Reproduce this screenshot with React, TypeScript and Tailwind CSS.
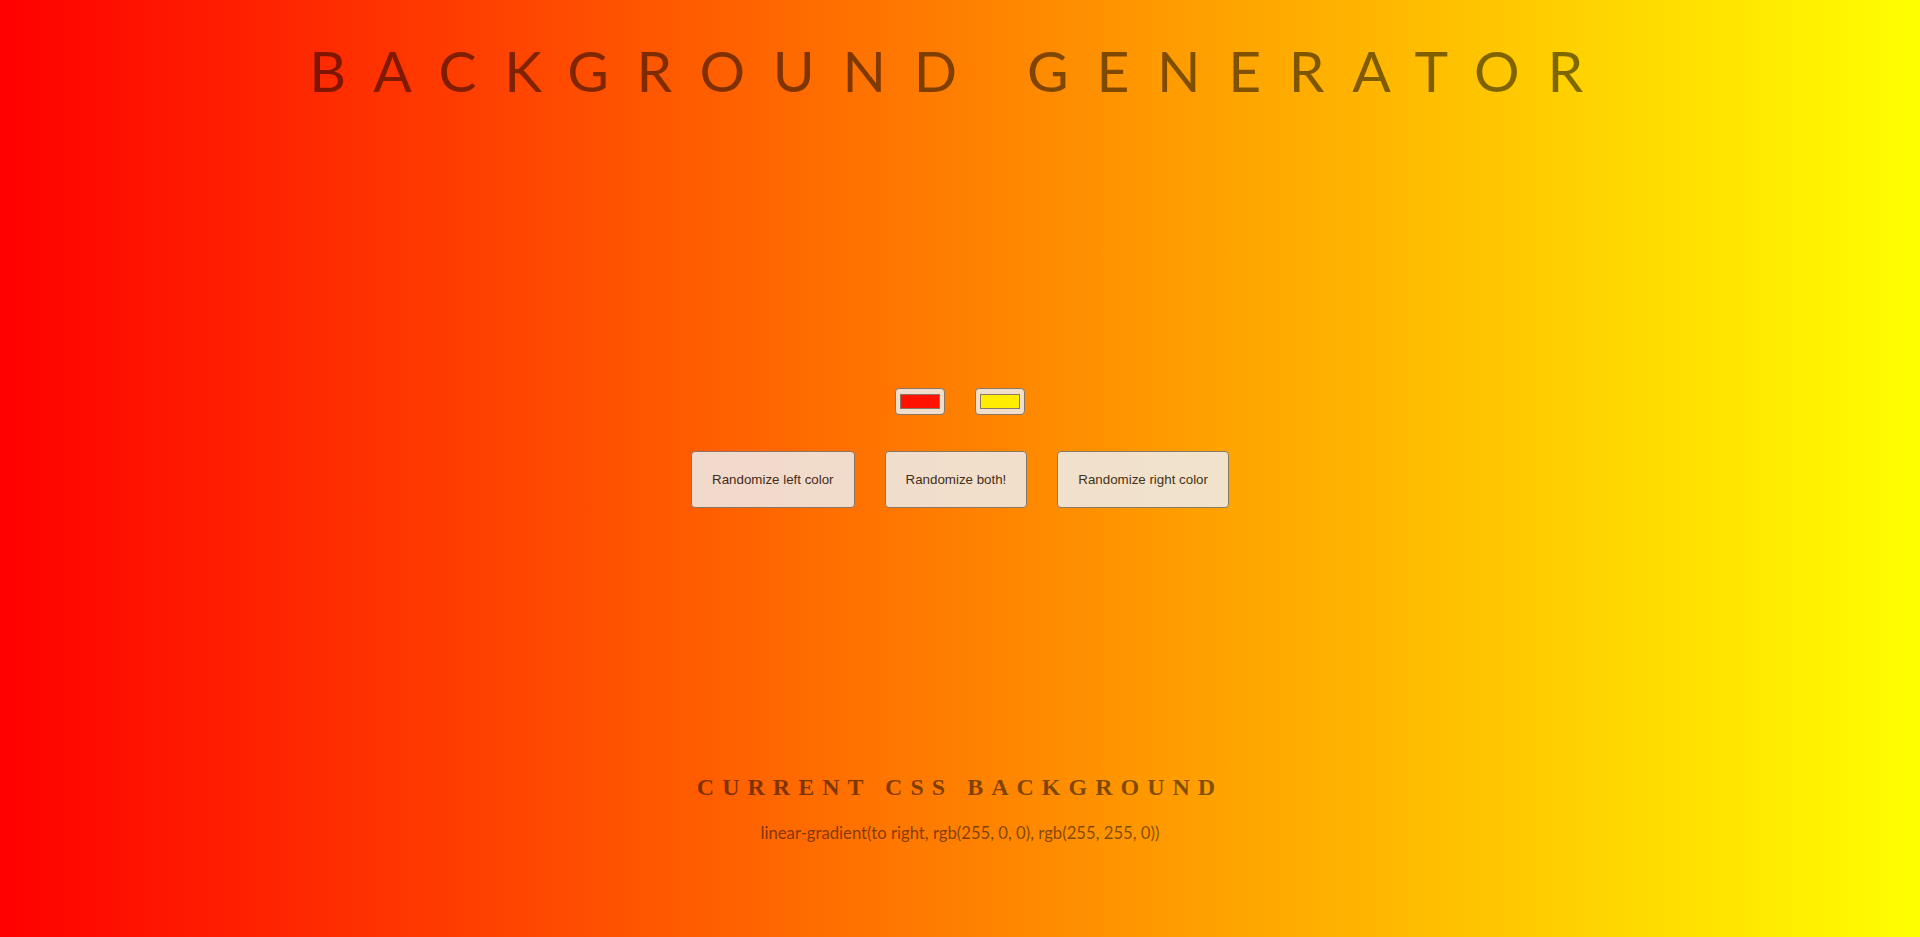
import React, { useState } from "react";

function hexToRgb(hex: string): string {
  const h = hex.replace("#", "");
  const r = parseInt(h.slice(0, 2), 16);
  const g = parseInt(h.slice(2, 4), 16);
  const b = parseInt(h.slice(4, 6), 16);
  return `rgb(${r}, ${g}, ${b})`;
}

function randomHex(): string {
  const n = Math.floor(Math.random() * 0xffffff);
  return "#" + n.toString(16).padStart(6, "0");
}

export default function App() {
  const [left, setLeft] = useState("#ff0000");
  const [right, setRight] = useState("#ffff00");
  const gradient = `linear-gradient(to right, ${hexToRgb(left)}, ${hexToRgb(right)})`;

  const btn =
    "bg-[#efefef] border border-[#767676] rounded-[4px] p-[20px] text-[13.333px] leading-[15px] text-[#222] opacity-[0.85] cursor-pointer font-['Liberation_Sans',Arial,sans-serif]";
  const colorInput =
    "w-[50px] h-[27px] bg-[#efefef] border border-[#767676] rounded-[4px] px-[2px] py-[1px] opacity-[0.85] cursor-pointer";

  return (
    <div
      className="min-h-[937px] w-full flex flex-col items-center text-center text-black/50 font-['Lato',sans-serif]"
      style={{ background: gradient }}
    >
      <h1 className="pt-[36px] text-[57px] leading-[1.2] font-normal tracking-[27.7px] uppercase">
        Background Generator
      </h1>

      <div className="mt-[284px] flex flex-row gap-[30px]">
        <input
          type="color"
          name="color1"
          value={left}
          onChange={(e) => setLeft(e.target.value)}
          className={colorInput}
        />
        <input
          type="color"
          name="color2"
          value={right}
          onChange={(e) => setRight(e.target.value)}
          className={colorInput}
        />
      </div>

      <div className="mt-[36px] flex flex-row gap-[30px]">
        <button className={btn} onClick={() => setLeft(randomHex())}>
          Randomize left color
        </button>
        <button
          className={btn}
          onClick={() => {
            setLeft(randomHex());
            setRight(randomHex());
          }}
        >
          Randomize both!
        </button>
        <button className={btn} onClick={() => setRight(randomHex())}>
          Randomize right color
        </button>
      </div>

      <h3 className="mt-[265px] text-[24px] leading-[1.2] font-bold tracking-[8px] uppercase font-['Liberation_Serif','Times_New_Roman',serif]">
        Current CSS Background
      </h3>
      <p className="mt-[21px] text-[16.7px] leading-[1.2]">{gradient}</p>
    </div>
  );
}
